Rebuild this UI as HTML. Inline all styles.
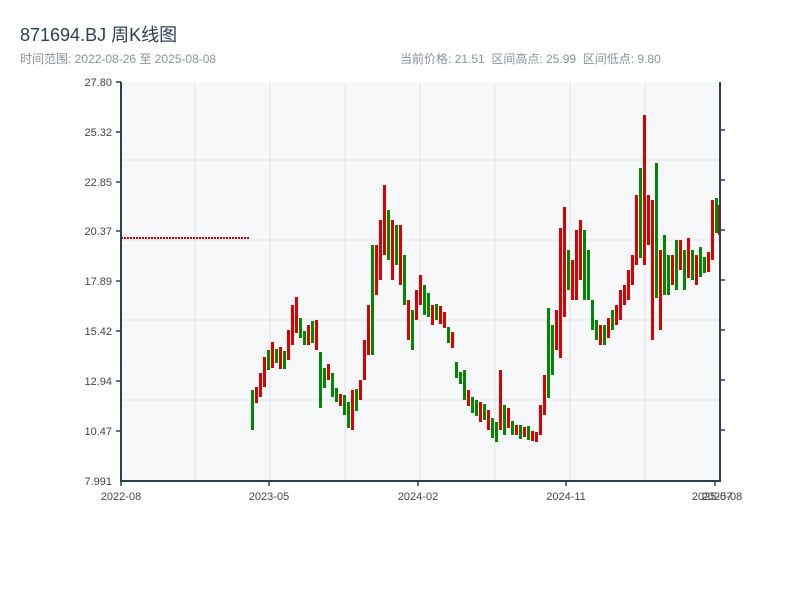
<!DOCTYPE html>
<html><head><meta charset="utf-8"><style>
body{margin:0;background:#fff;width:800px;height:600px;overflow:hidden;font-family:"Liberation Sans","Noto Sans CJK SC",sans-serif}
</style></head><body>
<svg width="800" height="600" xmlns="http://www.w3.org/2000/svg" font-family="Liberation Sans, Noto Sans CJK SC, sans-serif">
<text x="20" y="41" font-size="18" fill="#2c3e50">871694.BJ 周K线图</text>
<text x="20" y="63" font-size="12" fill="#8a9199">时间范围: 2022-08-26 至 2025-08-08</text>
<text x="400" y="63" font-size="12" fill="#8a9199" xml:space="preserve">当前价格: 21.51  区间高点: 25.99  区间低点: 9.80</text>
<rect x="121" y="82" width="599" height="399" fill="#f6f8fa"/>
<g stroke="#dfe3e8" stroke-width="1">
<line x1="195" y1="82" x2="195" y2="481"/><line x1="270" y1="82" x2="270" y2="481"/><line x1="345" y1="82" x2="345" y2="481"/><line x1="420" y1="82" x2="420" y2="481"/><line x1="495" y1="82" x2="495" y2="481"/><line x1="570" y1="82" x2="570" y2="481"/><line x1="645" y1="82" x2="645" y2="481"/>
<line x1="121" y1="160" x2="720" y2="160"/><line x1="121" y1="240" x2="720" y2="240"/><line x1="121" y1="320" x2="720" y2="320"/><line x1="121" y1="400" x2="720" y2="400"/>
</g>
<line x1="121" y1="238" x2="250" y2="238" stroke="#c00" stroke-width="2" stroke-dasharray="2,1"/>
<g fill="#d00">
<rect x="255" y="387" width="3" height="16"/><rect x="259" y="373" width="3" height="24"/><rect x="263" y="357" width="3" height="30"/><rect x="271" y="342" width="3" height="26"/><rect x="279" y="347" width="3" height="22"/><rect x="287" y="330" width="3" height="30"/><rect x="291" y="305" width="3" height="40"/><rect x="295" y="297" width="3" height="36"/><rect x="307" y="325" width="3" height="20"/><rect x="315" y="320" width="3" height="30"/><rect x="327" y="364" width="3" height="16"/><rect x="339" y="394" width="3" height="12"/><rect x="351" y="390" width="3" height="40"/><rect x="359" y="380" width="3" height="20"/><rect x="363" y="340" width="3" height="40"/><rect x="367" y="305" width="3" height="50"/><rect x="375" y="245" width="3" height="50"/><rect x="379" y="220" width="3" height="60"/><rect x="383" y="185" width="3" height="70"/><rect x="391" y="220" width="3" height="60"/><rect x="399" y="225" width="3" height="60"/><rect x="407" y="300" width="3" height="40"/><rect x="415" y="290" width="3" height="30"/><rect x="419" y="275" width="3" height="30"/><rect x="431" y="305" width="3" height="20"/><rect x="439" y="306" width="3" height="18"/><rect x="443" y="312" width="3" height="16"/><rect x="451" y="332" width="3" height="16"/><rect x="467" y="390" width="3" height="16"/><rect x="479" y="402" width="3" height="20"/><rect x="487" y="410" width="3" height="20"/><rect x="499" y="370" width="3" height="60"/><rect x="507" y="408" width="3" height="20"/><rect x="515" y="425" width="3" height="10"/><rect x="523" y="427" width="3" height="10"/><rect x="531" y="431" width="3" height="10"/><rect x="535" y="432" width="3" height="10"/><rect x="539" y="405" width="3" height="30"/><rect x="543" y="375" width="3" height="40"/><rect x="555" y="310" width="3" height="40"/><rect x="559" y="228" width="3" height="130"/><rect x="563" y="207" width="3" height="110"/><rect x="571" y="260" width="3" height="40"/><rect x="575" y="230" width="3" height="70"/><rect x="579" y="220" width="3" height="60"/><rect x="599" y="325" width="3" height="20"/><rect x="607" y="318" width="3" height="20"/><rect x="615" y="305" width="3" height="20"/><rect x="619" y="290" width="3" height="30"/><rect x="623" y="285" width="3" height="20"/><rect x="627" y="270" width="3" height="30"/><rect x="631" y="255" width="3" height="30"/><rect x="635" y="195" width="3" height="70"/><rect x="643" y="115" width="3" height="150"/><rect x="647" y="195" width="3" height="50"/><rect x="651" y="200" width="3" height="140"/><rect x="659" y="250" width="3" height="80"/><rect x="671" y="255" width="3" height="30"/><rect x="679" y="240" width="3" height="30"/><rect x="687" y="238" width="3" height="40"/><rect x="695" y="255" width="3" height="30"/><rect x="707" y="252" width="3" height="20"/><rect x="711" y="200" width="3" height="60"/><rect x="718" y="205" width="2" height="30"/>
</g>
<g fill="#080">
<rect x="251" y="390" width="3" height="40"/><rect x="267" y="350" width="3" height="20"/><rect x="275" y="349" width="3" height="14"/><rect x="283" y="351" width="3" height="18"/><rect x="299" y="318" width="3" height="20"/><rect x="303" y="331" width="3" height="14"/><rect x="311" y="321" width="3" height="22"/><rect x="319" y="352" width="3" height="56"/><rect x="323" y="368" width="3" height="20"/><rect x="331" y="373" width="3" height="24"/><rect x="335" y="388" width="3" height="14"/><rect x="343" y="395" width="3" height="20"/><rect x="347" y="402" width="3" height="26"/><rect x="355" y="389" width="3" height="22"/><rect x="371" y="245" width="3" height="110"/><rect x="387" y="210" width="3" height="50"/><rect x="395" y="225" width="3" height="40"/><rect x="403" y="255" width="3" height="50"/><rect x="411" y="310" width="3" height="40"/><rect x="423" y="285" width="3" height="30"/><rect x="427" y="293" width="3" height="24"/><rect x="435" y="304" width="3" height="16"/><rect x="447" y="327" width="3" height="16"/><rect x="455" y="362" width="3" height="16"/><rect x="459" y="372" width="3" height="12"/><rect x="463" y="370" width="3" height="30"/><rect x="471" y="397" width="3" height="16"/><rect x="475" y="400" width="3" height="16"/><rect x="483" y="404" width="3" height="16"/><rect x="491" y="418" width="3" height="20"/><rect x="495" y="422" width="3" height="20"/><rect x="503" y="405" width="3" height="30"/><rect x="511" y="421" width="3" height="14"/><rect x="519" y="425" width="3" height="14"/><rect x="527" y="426" width="3" height="14"/><rect x="547" y="308" width="3" height="90"/><rect x="551" y="325" width="3" height="50"/><rect x="567" y="250" width="3" height="40"/><rect x="583" y="230" width="3" height="70"/><rect x="587" y="250" width="3" height="50"/><rect x="591" y="300" width="3" height="30"/><rect x="595" y="320" width="3" height="20"/><rect x="603" y="325" width="3" height="20"/><rect x="611" y="310" width="3" height="20"/><rect x="639" y="168" width="3" height="90"/><rect x="655" y="163" width="3" height="135"/><rect x="663" y="235" width="3" height="60"/><rect x="667" y="255" width="3" height="40"/><rect x="675" y="240" width="3" height="50"/><rect x="683" y="250" width="3" height="40"/><rect x="691" y="250" width="3" height="30"/><rect x="699" y="247" width="3" height="30"/><rect x="703" y="257" width="3" height="16"/><rect x="715" y="198" width="3" height="35"/>
</g>
<g stroke="#2c3e50" stroke-width="2" fill="none">
<line x1="121" y1="82" x2="121" y2="482"/><line x1="120" y1="481" x2="721" y2="481"/><line x1="720" y1="82" x2="720" y2="482"/>
</g>
<g stroke="#2c3e50" stroke-width="1.5">
<line x1="116" y1="82" x2="121" y2="82"/><line x1="116" y1="132" x2="121" y2="132"/><line x1="116" y1="182" x2="121" y2="182"/><line x1="116" y1="231" x2="121" y2="231"/><line x1="116" y1="281" x2="121" y2="281"/><line x1="116" y1="331" x2="121" y2="331"/><line x1="116" y1="381" x2="121" y2="381"/><line x1="116" y1="431" x2="121" y2="431"/>
<line x1="720" y1="130" x2="725" y2="130"/><line x1="720" y1="180" x2="725" y2="180"/><line x1="720" y1="230" x2="725" y2="230"/><line x1="720" y1="280" x2="725" y2="280"/><line x1="720" y1="330" x2="725" y2="330"/><line x1="720" y1="380" x2="725" y2="380"/><line x1="720" y1="430" x2="725" y2="430"/>
<line x1="121" y1="481" x2="121" y2="486"/><line x1="269" y1="481" x2="269" y2="486"/><line x1="418" y1="481" x2="418" y2="486"/><line x1="566" y1="481" x2="566" y2="486"/><line x1="715" y1="481" x2="715" y2="486"/>
</g>
<g font-size="11" fill="#444" text-anchor="end">
<text x="112" y="86">27.80</text><text x="112" y="136">25.32</text><text x="112" y="186">22.85</text><text x="112" y="235">20.37</text><text x="112" y="285">17.89</text><text x="112" y="335">15.42</text><text x="112" y="385">12.94</text><text x="112" y="435">10.47</text><text x="112" y="485">7.991</text>
</g>
<g font-size="11" fill="#444" text-anchor="middle">
<text x="121" y="500">2022-08</text><text x="269" y="500">2023-05</text><text x="418" y="500">2024-02</text><text x="566" y="500">2024-11</text><text x="712" y="500">2025-07</text><text x="722" y="500">2025-08</text>
</g>
</svg>
</body></html>
